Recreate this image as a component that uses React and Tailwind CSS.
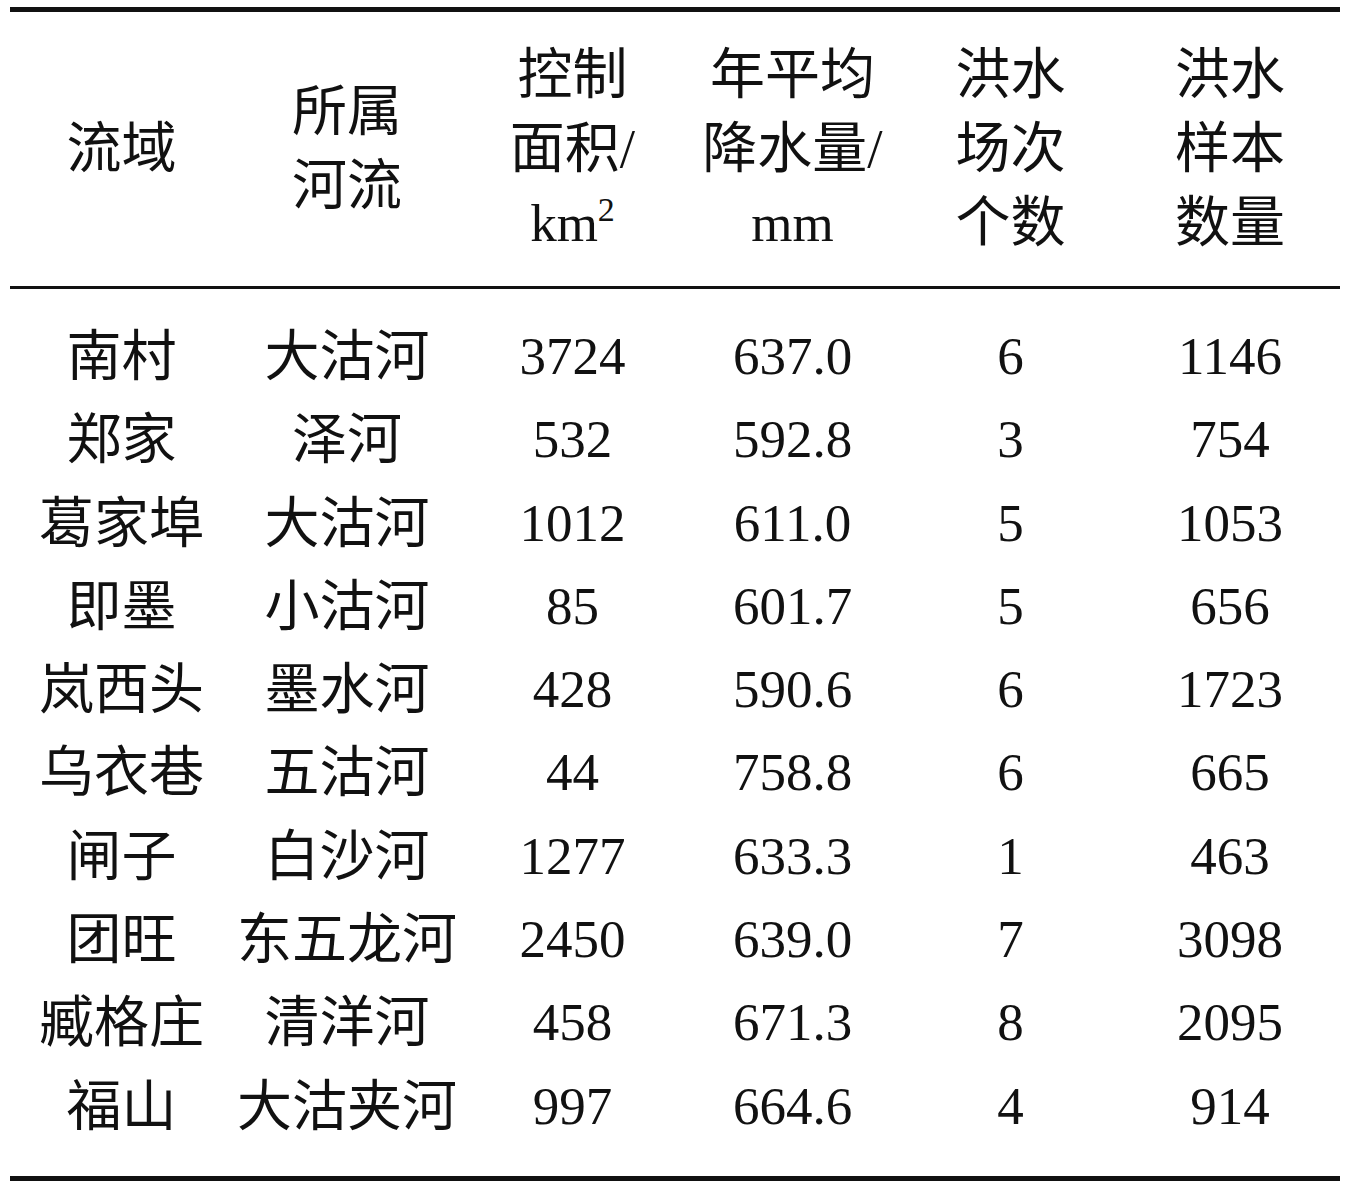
import React from "react";

const rows = [
  ["南村", "大沽河", "3724", "637.0", "6", "1146"],
  ["郑家", "泽河", "532", "592.8", "3", "754"],
  ["葛家埠", "大沽河", "1012", "611.0", "5", "1053"],
  ["即墨", "小沽河", "85", "601.7", "5", "656"],
  ["岚西头", "墨水河", "428", "590.6", "6", "1723"],
  ["乌衣巷", "五沽河", "44", "758.8", "6", "665"],
  ["闸子", "白沙河", "1277", "633.3", "1", "463"],
  ["团旺", "东五龙河", "2450", "639.0", "7", "3098"],
  ["臧格庄", "清洋河", "458", "671.3", "8", "2095"],
  ["福山", "大沽夹河", "997", "664.6", "4", "914"],
];

const cols = "grid grid-cols-[223px_228px_223px_217px_219px_220px]";

const App = () => {
  return (
    <div
      className="w-[1356px] h-[1193px] bg-white text-[#111] pt-[7px] pl-[10px]"
      style={{ fontFamily: '"Liberation Serif", "Noto Sans CJK SC", serif' }}
    >
      <div className="w-[1330px]">
        {/* top rule */}
        <div className="h-[5px] bg-[#111]" />

        {/* header */}
        <div className={`${cols} h-[274px] text-[55px] leading-[74px] text-center items-center`}>
          <div>流域</div>
          <div>
            所属
            <br />
            河流
          </div>
          <div>
            控制
            <br />
            面积/
            <br />
            <span className="text-[53px]">
              km<sup className="text-[34px] relative -top-[20px] align-baseline">2</sup>
            </span>
          </div>
          <div>
            年平均
            <br />
            降水量/
            <br />
            <span className="text-[53px]">mm</span>
          </div>
          <div>
            洪水
            <br />
            场次
            <br />
            个数
          </div>
          <div>
            洪水
            <br />
            样本
            <br />
            数量
          </div>
        </div>

        {/* middle rule */}
        <div className="h-[3px] bg-[#111]" />

        {/* body */}
        <div className="pt-[26px] pb-[28px]">
          {rows.map((r) => (
            <div key={r[0]} className={`${cols} h-[83.3px] leading-[83.3px] text-center`}>
              {r.map((c, i) => (
                <div key={i} className={i < 2 ? "whitespace-nowrap text-[55px]" : "whitespace-nowrap text-[53px]"}>
                  {c}
                </div>
              ))}
            </div>
          ))}
        </div>

        {/* bottom rule */}
        <div className="h-[5px] bg-[#111]" />
      </div>
    </div>
  );
};

export default App;
